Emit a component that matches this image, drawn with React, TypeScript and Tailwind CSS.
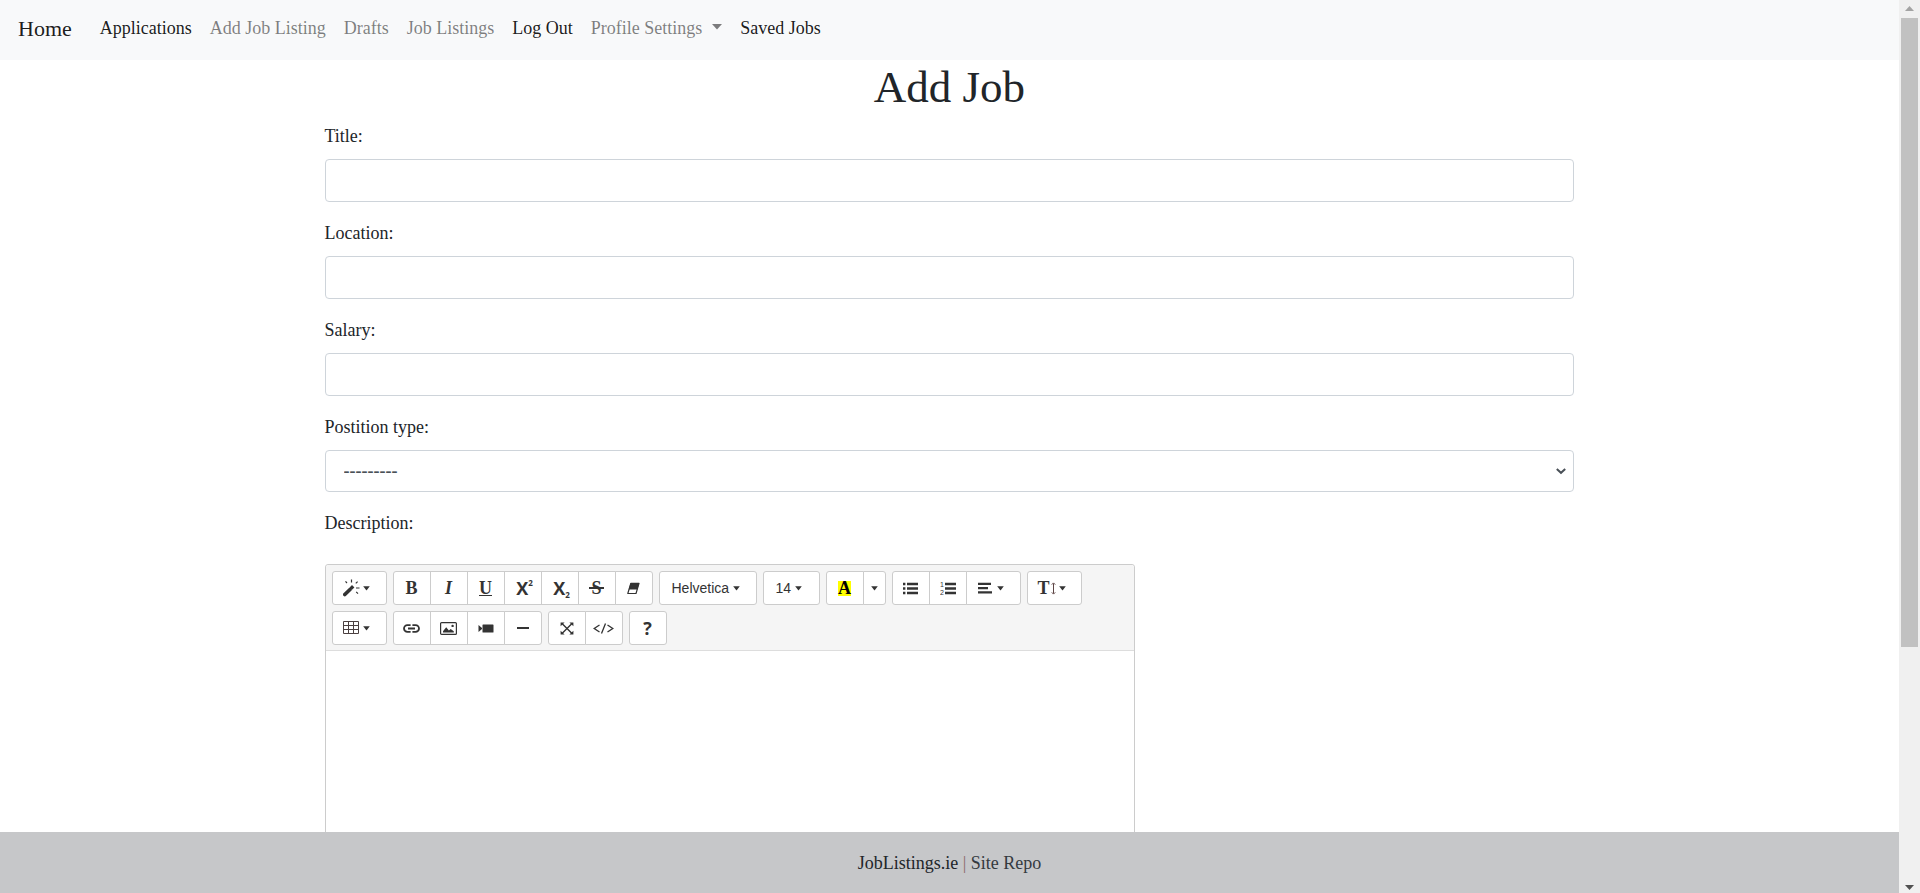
import type { ReactNode } from 'react';

const navLinks = [
  { label: 'Applications', active: true },
  { label: 'Add Job Listing', active: false },
  { label: 'Drafts', active: false },
  { label: 'Job Listings', active: false },
  { label: 'Log Out', active: true },
  { label: 'Profile Settings', active: false, menu: true },
  { label: 'Saved Jobs', active: true },
];

const textFields = [
  { id: 'title', label: 'Title:' },
  { id: 'location', label: 'Location:' },
  { id: 'salary', label: 'Salary:' },
];

function Caret() {
  return (
    <svg width="7" height="5" viewBox="0 0 7 5" fill="#333" aria-hidden="true">
      <path d="M.2 .3h6.6L3.500 4.600z" />
    </svg>
  );
}

function Group({ children }: { children: ReactNode }) {
  return <div className="flex">{children}</div>;
}

function Tool({ label, width = 'w-[38px]', children }: { label: string; width?: string; children: ReactNode }) {
  return (
    <button
      type="button"
      aria-label={label}
      className={`${width} -ml-px flex h-[34px] shrink-0 items-center justify-center border border-[#ccc] bg-white text-[#333] first:ml-0 first:rounded-l-[3px] last:rounded-r-[3px]`}
    >
      {children}
    </button>
  );
}

function MenuTool({ label, width = 'w-[55px]', children }: { label: string; width?: string; children: ReactNode }) {
  return (
    <Tool label={label} width={width}>
      <span className="flex w-full items-center gap-[3px] pl-2.5">
        {children}
        <Caret />
      </span>
    </Tool>
  );
}

function MagicIcon() {
  return (
    <svg width="17" height="18" viewBox="0 0 17 18" fill="none" stroke="#333" aria-hidden="true">
      <path d="M1.8 15.6 7 10.4" strokeWidth="3.6" strokeLinecap="round" />
      <path d="M7.8 9.6 10.200 7.200" strokeWidth="3.4" />
      <path d="M2.5 2.4 4 4M8.5.5v2.9M14.6 2.6 12.8 4.4M13 9h3.5M13.2 12.8l1.8 1.8" strokeWidth="1.2" />
    </svg>
  );
}

function TableIcon() {
  return (
    <svg width="17" height="14" viewBox="0 0 17 14" fill="none" stroke="#4b4040" aria-hidden="true">
      <path d="M.5.5h15v12H.5zM5.5.5v12M10.5.5v12M.5 4.5h15M.5 8.5h15" />
    </svg>
  );
}

function EraserIcon() {
  return (
    <svg width="13" height="13" viewBox="0 0 13 13" aria-hidden="true">
      <path d="M3.6 1h8.6L10.4 7.400H1.7z" fill="#333" />
      <path d="M3.8 1.3h8.2L9 11.5H.8z" fill="none" stroke="#333" strokeWidth="1.2" strokeLinejoin="round" />
    </svg>
  );
}

function LinkIcon() {
  return (
    <svg width="17" height="9" viewBox="0 0 17 9" fill="none" stroke="#333" strokeWidth="1.8" aria-hidden="true">
      <path d="M7.600 1.100H4.400a3.400 3.400 0 0 0 0 6.800h3.200M9.400 1.100h3.200a3.400 3.400 0 0 1 0 6.800H9.400M5 4.500h7" />
    </svg>
  );
}

function PictureIcon() {
  return (
    <svg width="17" height="13" viewBox="0 0 17 13" aria-hidden="true">
      <rect x=".6" y=".6" width="15.8" height="11.8" rx="1" fill="none" stroke="#333" strokeWidth="1.2" />
      <path d="M3 10.6V9.300l3.200-4.100 2.700 3.200 1.800-1.500L13.800 9.300v1.300z" fill="#333" />
      <circle cx="12.6" cy="3.9" r="1.2" fill="#333" />
    </svg>
  );
}

function VideoIcon() {
  return (
    <svg width="16" height="9" viewBox="0 0 16 9" fill="#333" aria-hidden="true">
      <path d="M.5 1 4 4v1L.5 8z" />
      <rect x="4.5" y=".5" width="11" height="8" rx=".6" />
    </svg>
  );
}

function FullscreenIcon() {
  return (
    <svg width="14" height="13" viewBox="0 0 14 13" aria-hidden="true">
      <path d="M2 1.5l10 10M12 1.5l-10 10" stroke="#333" strokeWidth="1.4" />
      <path d="M.6.5h4L.6 4.300zM13.4.5h-4l4 3.800zM.6 12.5h4l-4-3.800zM13.4 12.5h-4l4-3.800z" fill="#333" />
    </svg>
  );
}

function CodeIcon() {
  return (
    <svg width="21" height="11" viewBox="0 0 21 11" fill="none" stroke="#333" strokeWidth="1.3" aria-hidden="true">
      <path d="M6.5 2 1.2 5.5l5.3 3.5M14.5 2l5.3 3.5L14.5 9M12.5.5l-4 10" />
    </svg>
  );
}

function BulletsIcon() {
  return (
    <svg width="15" height="13" viewBox="0 0 15 13" fill="#333" aria-hidden="true">
      <path d="M0 .8h2.400v2.400H0zM0 5.300h2.400v2.400H0zM0 9.800h2.400v2.400H0zM4 .8h11v2.400H4zM4 5.300h11v2.400H4zM4 9.800h11v2.400H4z" />
    </svg>
  );
}

function NumbersIcon() {
  return (
    <svg width="16" height="13" viewBox="0 0 16 13" aria-hidden="true">
      <path d="M5 .8h11v2.400H5zM5 5.300h11v2.400H5zM5 9.800h11v2.400H5z" fill="#333" />
      <text x="0" y="5" fontSize="7" fill="#333" fontFamily="Liberation Sans, sans-serif">1</text>
      <text x="0" y="12.5" fontSize="7" fill="#333" fontFamily="Liberation Sans, sans-serif">2</text>
    </svg>
  );
}

function AlignIcon() {
  return (
    <svg width="17" height="12" viewBox="0 0 17 12" fill="#333" aria-hidden="true">
      <path d="M1 .8h13v2.200H1zM1 5h10v2.200H1zM1 9.200h14v2.200H1z" />
    </svg>
  );
}

function LineHeightIcon() {
  return (
    <span className="flex items-center">
      <span className="w-3 text-lg leading-5 font-bold">T</span>
      <svg width="6" height="13" viewBox="0 0 6 13" fill="none" stroke="#5c4343" strokeWidth="1" aria-hidden="true">
        <path d="M3.5 1.5v10M1.800 2.600l1.700-1.700 1.700 1.700M1.800 10.400l1.700 1.700 1.700-1.700" />
      </svg>
    </span>
  );
}

function Editor() {
  return (
    <div className="w-[810px] max-w-full rounded-[3px] border border-[#ccc]">
      <div
        role="toolbar"
        aria-label="Text formatting"
        className="flex flex-wrap gap-1.5 rounded-t-[3px] border-b border-[#ddd] bg-[#f5f5f5] pt-1.5 pr-10 pb-[5px] pl-1.5"
      >
        <Group>
          <MenuTool label="Style"><MagicIcon /></MenuTool>
        </Group>
        <Group>
          <Tool label="Bold"><span className="text-lg leading-5 font-bold">B</span></Tool>
          <Tool label="Italic"><span className="text-lg leading-5 font-bold italic">I</span></Tool>
          <Tool label="Underline">
            <span className="border-b border-[#333] text-lg leading-[14px] font-bold">U</span>
          </Tool>
          <Tool label="Superscript">
            <span className="flex items-start pl-1 font-['Open_Sans',sans-serif] text-lg leading-5 font-bold">
              X<span className="text-[8px] leading-[10px]">2</span>
            </span>
          </Tool>
          <Tool label="Subscript">
            <span className="flex items-end pl-1 font-['Open_Sans',sans-serif] text-lg leading-5 font-bold">
              X<span className="text-[8px] leading-[6px]">2</span>
            </span>
          </Tool>
          <Tool label="Strikethrough">
            <span className="relative px-0.5 text-lg leading-5 font-bold">
              S<span className="absolute inset-x-0 top-[9px] h-0.5 bg-[#333]" />
            </span>
          </Tool>
          <Tool label="Remove font style"><EraserIcon /></Tool>
        </Group>
        <Group>
          <Tool label="Font family" width="w-[98px]">
            <span className="flex w-full items-center gap-1 pl-3 font-['Liberation_Sans',sans-serif] text-sm">
              Helvetica <Caret />
            </span>
          </Tool>
        </Group>
        <Group>
          <Tool label="Font size" width="w-[57px]">
            <span className="flex w-full items-center gap-1 pl-3 font-['Liberation_Sans',sans-serif] text-sm">
              14 <Caret />
            </span>
          </Tool>
        </Group>
        <Group>
          <Tool label="Recent color">
            <span className="bg-[#ff0] text-lg leading-[15px] font-bold text-black">A</span>
          </Tool>
          <Tool label="More colors" width="w-[23px]"><Caret /></Tool>
        </Group>
        <Group>
          <Tool label="Unordered list"><BulletsIcon /></Tool>
          <Tool label="Ordered list"><NumbersIcon /></Tool>
          <MenuTool label="Paragraph"><AlignIcon /></MenuTool>
        </Group>
        <Group>
          <MenuTool label="Line height"><LineHeightIcon /></MenuTool>
        </Group>
        <Group>
          <MenuTool label="Table"><TableIcon /></MenuTool>
        </Group>
        <Group>
          <Tool label="Link"><LinkIcon /></Tool>
          <Tool label="Picture"><PictureIcon /></Tool>
          <Tool label="Video"><VideoIcon /></Tool>
          <Tool label="Horizontal rule"><span className="h-0.5 w-3 bg-[#333]" /></Tool>
        </Group>
        <Group>
          <Tool label="Full screen"><FullscreenIcon /></Tool>
          <Tool label="Code view"><CodeIcon /></Tool>
        </Group>
        <Group>
          <Tool label="Help">
            <span className="font-['Open_Sans',sans-serif] text-lg leading-5 font-bold">?</span>
          </Tool>
        </Group>
      </div>
      <textarea id="description" className="block h-[480px] w-full resize-none bg-white p-2.5 outline-none" />
    </div>
  );
}

function Scrollbar() {
  return (
    <div aria-hidden="true" className="flex w-[21px] shrink-0 flex-col items-center bg-[#f0f0f0]">
      <svg className="shrink-0" width="21" height="18" viewBox="0 0 21 18">
        <path d="M10.5 6 15 11H6z" fill="#a3a3a3" />
      </svg>
      <div className="flex min-h-0 w-[17px] flex-1 flex-col">
        <div className="h-[73.4%] bg-[#c1c1c1]" />
      </div>
      <svg className="shrink-0" width="21" height="18" viewBox="0 0 21 18">
        <path d="M6 10h9l-4.500 5z" fill="#505050" />
      </svg>
    </div>
  );
}

export default function App() {
  return (
    <div className="flex h-screen bg-white font-['Liberation_Serif',serif] text-lg leading-[27px] text-[#212529]">
      <div className="flex min-w-0 flex-1 flex-col">
        <nav className="flex shrink-0 flex-wrap items-center gap-7 bg-[#f8f9fa] px-[18px] pt-[15px] pb-[18px]">
          <a href="#home" className="text-[22px] leading-[27px] text-black/90">Home</a>
          <ul className="flex flex-wrap gap-x-[18px]">
            {navLinks.map((link) => (
              <li key={link.label}>
                <a href="#nav" className={link.active ? 'flex items-center text-black/90' : 'flex items-center text-black/50'}>
                  {link.label}
                  {link.menu && (
                    <svg className="mb-1 ml-2.5" width="10" height="6" viewBox="0 0 10 6" fill="currentColor" aria-hidden="true">
                      <path d="M0 0h10L5 5.500z" />
                    </svg>
                  )}
                </a>
              </li>
            ))}
          </ul>
        </nav>

        <main className="min-h-0 flex-1 overflow-hidden">
          <form className="mx-auto w-2/3 px-2">
            <h1 className="mb-[9px] text-center text-[45px] leading-[54px]">Add Job</h1>
            {textFields.map((field) => (
              <div key={field.id} className="mb-[18px]">
                <label htmlFor={field.id} className="mb-[9px] block">{field.label}</label>
                <input
                  id={field.id}
                  type="text"
                  className="block h-[43px] w-full rounded border border-[#ced4da] bg-white px-3.5 text-[#495057] outline-none"
                />
              </div>
            ))}
            <div className="mb-[18px]">
              <label htmlFor="position" className="mb-[9px] block">Postition type:</label>
              <div className="relative">
                <select
                  id="position"
                  className="block h-[42px] w-full appearance-none rounded border border-[#ced4da] bg-white px-[18px] font-bold text-[#495057] outline-none"
                >
                  <option>---------</option>
                </select>
                <svg
                  className="pointer-events-none absolute top-[18px] right-2"
                  width="10"
                  height="7"
                  viewBox="0 0 10 7"
                  fill="none"
                  stroke="#495057"
                  strokeWidth="2"
                  aria-hidden="true"
                >
                  <path d="M.8 1 5 4.800 9.200 1" />
                </svg>
              </div>
            </div>
            <label htmlFor="description" className="mb-[27px] block">Description:</label>
            <Editor />
          </form>
        </main>

        <footer className="shrink-0 bg-[#c6c7c9] pt-[18px] pb-4 text-center">
          <a href="#site">JobListings.ie</a> <span className="text-[#8b6b6b]">|</span>{' '}
          <a href="#repo" className="text-[#343a40]">Site Repo</a>
        </footer>
      </div>
      <Scrollbar />
    </div>
  );
}
